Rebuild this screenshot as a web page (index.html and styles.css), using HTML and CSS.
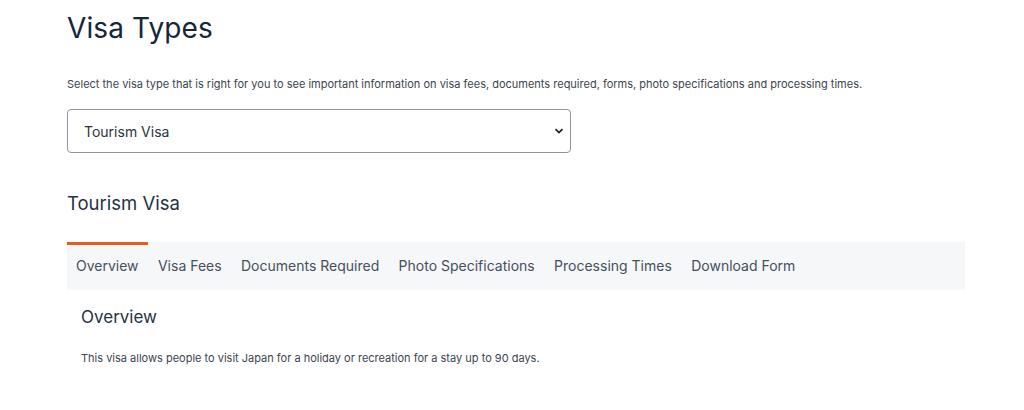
FILE: index.html
```html
<!DOCTYPE html>
<html lang="en">
<head>
<meta charset="utf-8">
<title>Visa Types</title>
<link rel="stylesheet" href="styles.css">
</head>
<body>
<main class="page">
  <h1 class="title">Visa Types</h1>
  <p class="intro">Select the visa type that is right for you to see important information on visa fees, documents required, forms, photo specifications and processing times.</p>
  <div class="select-wrap">
    <div class="select">
      <span class="select-value">Tourism Visa</span>
      <svg class="chev" width="10" height="8" viewBox="0 0 10 8"><path d="M1.5 2.2 L5 5.6 L8.5 2.2" fill="none" stroke="#222" stroke-width="1.8"/></svg>
    </div>
  </div>
  <h2 class="subtitle">Tourism Visa</h2>
  <nav class="tabs">
    <span class="tab active">Overview</span>
    <span class="tab">Visa Fees</span>
    <span class="tab">Documents Required</span>
    <span class="tab">Photo Specifications</span>
    <span class="tab">Processing Times</span>
    <span class="tab">Download Form</span>
  </nav>
  <section class="panel">
    <h3 class="panel-title">Overview</h3>
    <p class="panel-text">This visa allows people to visit Japan for a holiday or recreation for a stay up to 90 days.</p>
  </section>
</main>
</body>
</html>
```
FILE: styles.css
```css
* { box-sizing: border-box; }
html, body { margin: 0; padding: 0; background: #fff; }
body { font-family: Inter, "Noto Sans", sans-serif; color: #4a5462; }
.page { width: 898px; margin-left: 67px; padding-top: 10px; }
.title { margin: 0; font-size: 28px; font-weight: 400; line-height: 36px; color: #14263a; letter-spacing: 0.1px; }
.intro { margin: 31px 0 0; font-size: 11px; line-height: 15px; color: #3c4450; }
.select-wrap { margin-top: 17px; }
.select { width: 504px; height: 44px; border: 1px solid #8d96a0; border-radius: 4px; display: flex; align-items: center; justify-content: space-between; padding: 0 6px 0 16px; }
.select-value { font-size: 14px; color: #2b3440; }
.subtitle { margin: 38px 0 0; font-size: 18.5px; font-weight: 400; line-height: 24px; color: #253242; }
.tabs { margin-top: 27px; background: #f6f7f9; height: 48px; display: flex; align-items: center; }
.tab { font-size: 14px; color: #46505c; padding: 0 9.7px; line-height: 48px; position: relative; }
.tab.active { padding-left: 9px; }
.tab.active::before { content: ""; position: absolute; left: 0; right: 0; top: 0; height: 3px; background: #e85c1c; }
.panel { padding: 17px 14px; }
.panel-title { margin: 0; font-size: 17px; font-weight: 400; line-height: 21px; color: #253242; }
.panel-text { margin: 23px 0 0; font-size: 11px; line-height: 14px; color: #3c4450; }
```
